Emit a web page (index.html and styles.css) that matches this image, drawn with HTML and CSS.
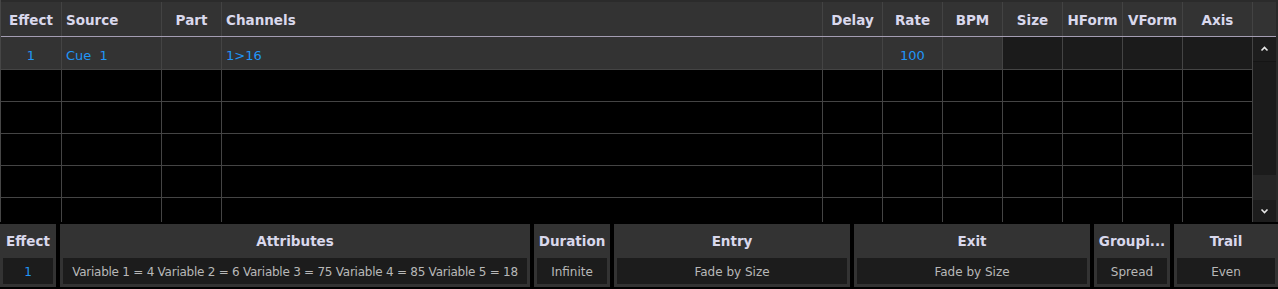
FILE: index.html
```html
<!DOCTYPE html>
<html>
<head>
<meta charset="utf-8">
<link rel="stylesheet" href="styles.css">
</head>
<body>
<div class="app">
  <div class="table">
    <div class="thead">
      <div class="th c-effect center">Effect</div>
      <div class="th c-source">Source</div>
      <div class="th c-part center">Part</div>
      <div class="th c-channels">Channels</div>
      <div class="th c-60 center">Delay</div>
      <div class="th c-60 center">Rate</div>
      <div class="th c-60 center">BPM</div>
      <div class="th c-60 center">Size</div>
      <div class="th c-60 center">HForm</div>
      <div class="th c-60 center">VForm</div>
      <div class="th c-axis center">Axis</div>
      <div class="th c-fill"></div>
    </div>
    <div class="tbody">
      <div class="rows">
        <div class="row row-first">
          <div class="td c-effect center blue">1</div>
          <div class="td c-source blue">Cue&nbsp;&nbsp;1</div>
          <div class="td c-part"></div>
          <div class="td c-channels blue">1&gt;16</div>
          <div class="td c-60"></div>
          <div class="td c-60 center blue">100</div>
          <div class="td c-60"></div>
          <div class="td c-60 dark"></div>
          <div class="td c-60 dark"></div>
          <div class="td c-60 dark"></div>
          <div class="td c-axis dark"></div>
        </div>
        <div class="row"><div class="td c-effect"></div><div class="td c-source"></div><div class="td c-part"></div><div class="td c-channels"></div><div class="td c-60"></div><div class="td c-60"></div><div class="td c-60"></div><div class="td c-60"></div><div class="td c-60"></div><div class="td c-60"></div><div class="td c-axis"></div></div>
        <div class="row"><div class="td c-effect"></div><div class="td c-source"></div><div class="td c-part"></div><div class="td c-channels"></div><div class="td c-60"></div><div class="td c-60"></div><div class="td c-60"></div><div class="td c-60"></div><div class="td c-60"></div><div class="td c-60"></div><div class="td c-axis"></div></div>
        <div class="row"><div class="td c-effect"></div><div class="td c-source"></div><div class="td c-part"></div><div class="td c-channels"></div><div class="td c-60"></div><div class="td c-60"></div><div class="td c-60"></div><div class="td c-60"></div><div class="td c-60"></div><div class="td c-60"></div><div class="td c-axis"></div></div>
        <div class="row"><div class="td c-effect"></div><div class="td c-source"></div><div class="td c-part"></div><div class="td c-channels"></div><div class="td c-60"></div><div class="td c-60"></div><div class="td c-60"></div><div class="td c-60"></div><div class="td c-60"></div><div class="td c-60"></div><div class="td c-axis"></div></div>
        <div class="row row-last"><div class="td c-effect"></div><div class="td c-source"></div><div class="td c-part"></div><div class="td c-channels"></div><div class="td c-60"></div><div class="td c-60"></div><div class="td c-60"></div><div class="td c-60"></div><div class="td c-60"></div><div class="td c-60"></div><div class="td c-axis"></div></div>
      </div>
      <div class="scrollbar">
        <div class="sb-btn sb-up">
          <svg width="9" height="6" viewBox="0 0 9 6"><polyline points="1.5,4.5 4.5,1.5 7.5,4.5" fill="none" stroke="#e8e8e8" stroke-width="1.6"/></svg>
        </div>
        <div class="sb-track"></div>
        <div class="sb-thumb"></div>
        <div class="sb-btn sb-down">
          <svg width="9" height="6" viewBox="0 0 9 6"><polyline points="1.5,1.5 4.5,4.5 7.5,1.5" fill="none" stroke="#e8e8e8" stroke-width="1.6"/></svg>
        </div>
      </div>
    </div>
  </div>
  <div class="panels">
    <div class="panel p-effect"><div class="p-head">Effect</div><div class="p-val blue">1</div></div>
    <div class="panel p-attr"><div class="p-head">Attributes</div><div class="p-val">Variable 1 = 4 Variable 2 = 6 Variable 3 = 75 Variable 4 = 85 Variable 5 = 18</div></div>
    <div class="panel p-dur"><div class="p-head">Duration</div><div class="p-val">Infinite</div></div>
    <div class="panel p-entry"><div class="p-head">Entry</div><div class="p-val">Fade by Size</div></div>
    <div class="panel p-exit"><div class="p-head">Exit</div><div class="p-val">Fade by Size</div></div>
    <div class="panel p-group"><div class="p-head">Groupi...</div><div class="p-val">Spread</div></div>
    <div class="panel p-trail"><div class="p-head">Trail</div><div class="p-val">Even</div></div>
  </div>
</div>
</body>
</html>
```
FILE: styles.css
```css
* { box-sizing: border-box; }
html, body {
  margin: 0;
  padding: 0;
  background: #000;
}
body {
  font-family: "DejaVu Sans", Verdana, sans-serif;
  width: 1278px;
  height: 289px;
  overflow: hidden;
}
.app {
  display: flex;
  flex-direction: column;
  gap: 2px;
}
.table {
  height: 222px;
  border-left: 1px solid #464646;
  border-right: 2px solid #2a2a2a;
  display: flex;
  flex-direction: column;
}
.thead {
  display: flex;
  height: 37px;
  background: #333;
  border-top: 2px solid #2b2b2b;
  border-bottom: 1px solid #a49db3;
}
.th {
  height: 100%;
  border-right: 1px solid #434343;
  font-weight: bold;
  font-size: 13.5px;
  color: #d9d8ec;
  display: flex;
  align-items: center;
  padding-left: 4px;
  padding-top: 1px;
}
.th.center, .td.center { justify-content: center; padding-left: 0; }
.c-effect { width: 61px; flex: none; }
.c-source { width: 100px; flex: none; }
.c-part { width: 60px; flex: none; }
.c-channels { width: 601px; flex: none; }
.c-60 { width: 60px; flex: none; }
.c-axis { width: 70px; flex: none; }
.th.c-fill { flex: 1; border-right: none; }

.tbody {
  flex: 1;
  display: flex;
  min-height: 0;
}
.rows {
  display: flex;
  flex-direction: column;
  width: 1252px;
}
.row {
  display: flex;
  height: 32px;
  flex: none;
  border-bottom: 1px solid #444;
}
.row-first {
  height: 33px;
  background: #333;
}
.row-last {
  flex: 1;
  border-bottom: none;
}
.td {
  height: 100%;
  border-right: 1px solid #444;
  display: flex;
  align-items: center;
  padding-left: 4px;
  font-size: 13px;
  padding-top: 5px;
}
.td.dark { background: #1b1b1b; }
.blue { color: #2196f7; }

.scrollbar {
  width: 23px;
  display: flex;
  flex-direction: column;
  background: #1a1a1a;
}
.sb-btn {
  display: flex;
  align-items: center;
  justify-content: center;
  background: #1d1d1d;
  flex: none;
}
.sb-up { height: 25px; border-bottom: 1px solid #151515; }
.sb-track { flex: 1; background: #1b1b1b; }
.sb-thumb { height: 25px; background: #262626; flex: none; }
.sb-down { height: 22px; }

.panels {
  display: flex;
  gap: 4px;
}
.panel {
  background: #333;
  height: 63px;
  padding: 0 3px 3px;
  display: flex;
  flex-direction: column;
  flex: none;
}
.p-head {
  height: 34px;
  display: flex;
  align-items: center;
  justify-content: center;
  font-weight: bold;
  font-size: 13.5px;
  color: #d9d8ec;
  white-space: nowrap;
  overflow: hidden;
}
.p-val {
  flex: 1;
  background: #1c1c1c;
  display: flex;
  align-items: center;
  justify-content: center;
  font-size: 12px;
  color: #b8b8b8;
  white-space: nowrap;
  overflow: hidden;
  padding-top: 2px;
}
.p-attr .p-val { letter-spacing: -0.25px; }
.p-val.blue { color: #2196f7; }
.p-effect { width: 56px; }
.p-attr { width: 470px; }
.p-dur { width: 76px; }
.p-entry { width: 236px; }
.p-exit { width: 236px; }
.p-group { width: 76px; }
.p-trail { width: 104px; }
```
